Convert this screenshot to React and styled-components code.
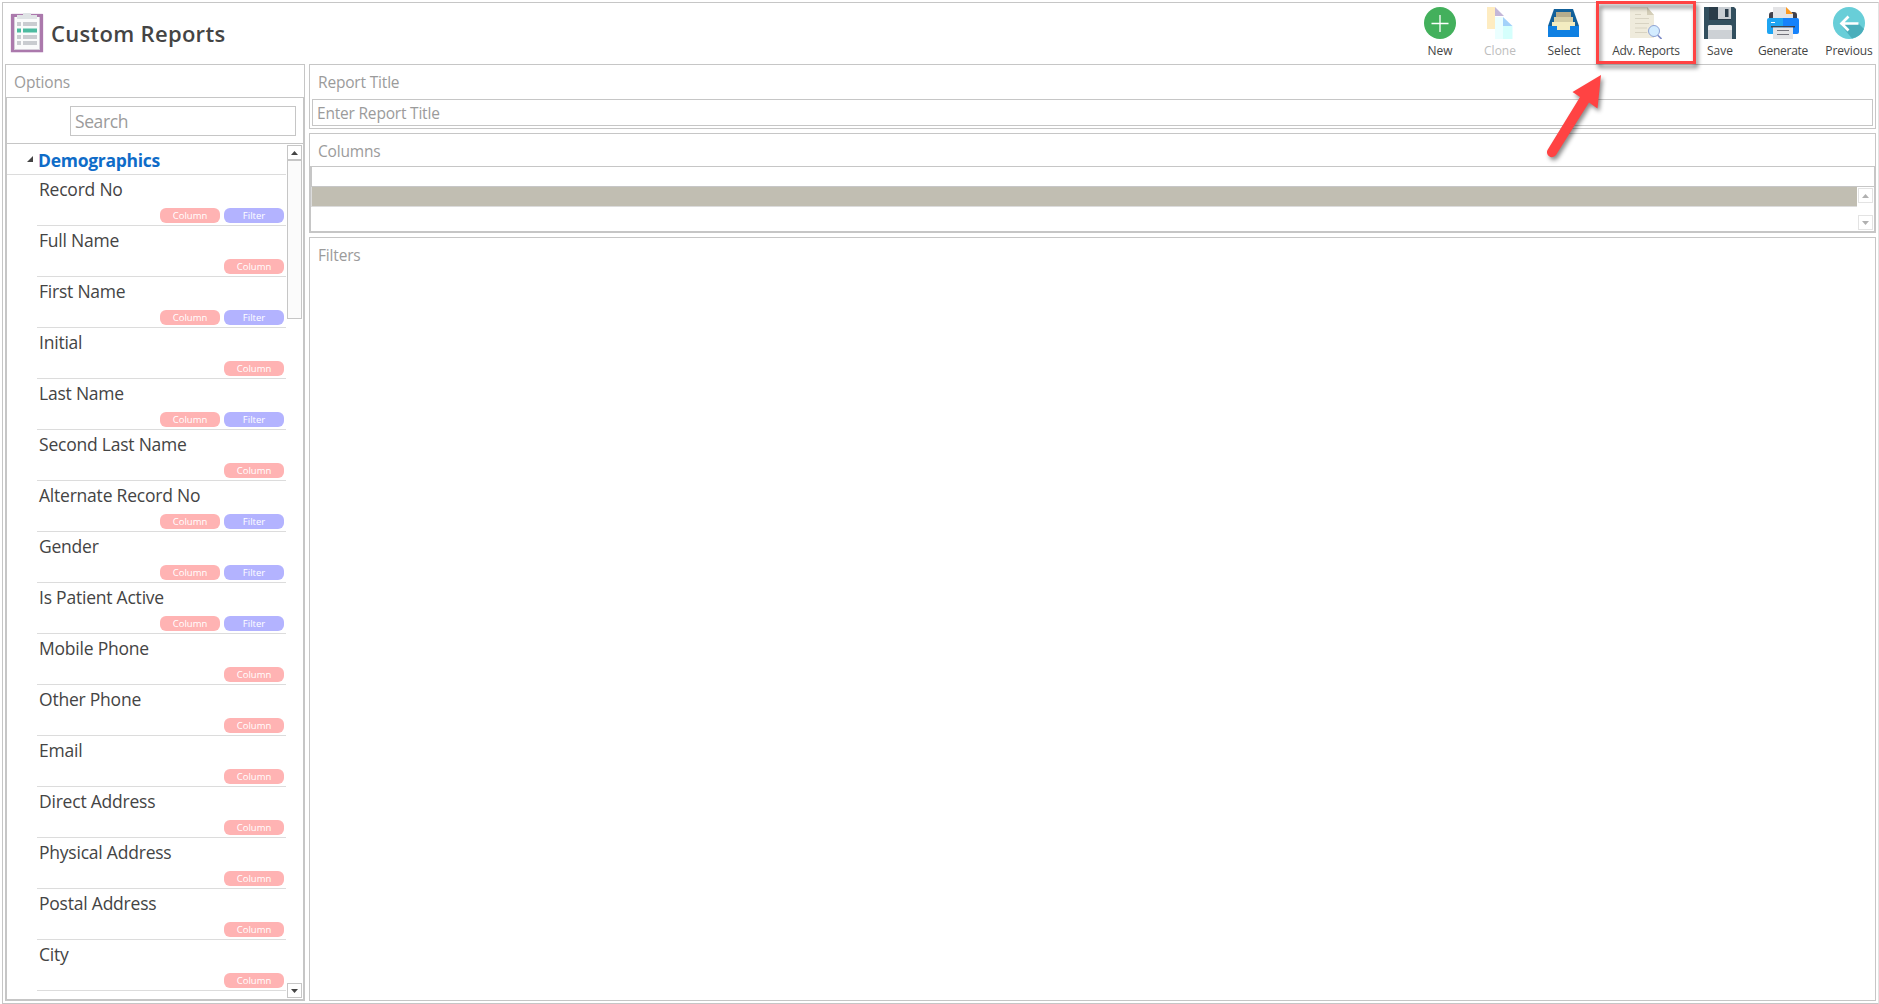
import styled, { createGlobalStyle } from "styled-components";

const GlobalStyle = createGlobalStyle`
	* {
		box-sizing: border-box;
	}
	body {
		margin: 0;
		background: #fff;
		font-family: "Open Sans", "Noto Sans", sans-serif;
		color: #444;
	}
`;

const Page = styled.div`
	position: relative;
	width: 1879px;
	height: 1004px;
	padding: 2px 0 0 2px;
	overflow: hidden;
`;

const Frame = styled.div`
	display: flex;
	flex-direction: column;
	height: 1002px;
	border: 1px solid #c6c6c6;
	border-right-color: #e3e3e3;
	padding: 0 2px 2px;
`;

const Header = styled.header`
	display: flex;
	justify-content: space-between;
	height: 61px;
	margin-right: -2px;
`;

const Brand = styled.div`
	display: flex;
	align-items: flex-start;
	padding: 10px 0 0 5px;
`;

const Title = styled.h1`
	margin: 4px 0 0 7px;
	font-size: 22px;
	line-height: 32px;
	font-weight: 600;
	letter-spacing: 0.3px;
	white-space: nowrap;
`;

const Toolbar = styled.nav`
	display: flex;
`;

const Tool = styled.div`
	display: flex;
	flex-direction: column;
	align-items: center;
	width: ${(p) => p.$width}px;
	margin-left: ${(p) => p.$gap || 0}px;
	padding-top: 4px;

	svg {
		display: block;
		opacity: ${(p) => (p.$disabled ? 0.4 : 1)};
	}
`;

const ToolLabel = styled.span`
	margin-top: 4px;
	font-size: 12px;
	line-height: 16px;
	letter-spacing: ${(p) => p.$tracking || 0}px;
	white-space: nowrap;
	color: ${(p) => (p.$disabled ? "#bdbdbd" : "#444")};
`;

const Body = styled.div`
	display: flex;
	flex: 1;
	gap: 4px;
	min-height: 0;
`;

const Panel = styled.section`
	display: flex;
	flex-direction: column;
	border: 1px solid #c6c6c6;
	height: ${(p) => p.$height || "auto"};
	flex: ${(p) => (p.$grow ? 1 : "none")};
	min-height: 0;
`;

const OptionsPanel = styled(Panel)`
	width: 300px;
`;

const PanelTitle = styled.h2`
	margin: 0;
	padding: 6px 0 0 8px;
	height: ${(p) => p.$height}px;
	font-size: 15.5px;
	line-height: 23px;
	font-weight: 400;
	letter-spacing: -0.18px;
	color: #9b9b9b;
`;

const OptionsBody = styled.div`
	display: flex;
	flex-direction: column;
	flex: 1;
	min-height: 0;
	border: 1px solid #c6c6c6;
`;

const SearchBar = styled.div`
	height: 46px;
	padding: 8px 8px 0 63px;
	border-bottom: 1px solid #c6c6c6;
`;

const SearchField = styled.div`
	width: 226px;
	height: 30px;
	padding-left: 4px;
	border: 1px solid #c6c6c6;
	font-size: 17.5px;
	line-height: 29px;
	letter-spacing: -0.4px;
	color: #9b9b9b;
`;

const ListArea = styled.div`
	display: flex;
	flex: 1;
	justify-content: space-between;
	min-height: 0;
	padding-right: 1px;
`;

const List = styled.div`
	width: 279px;
	overflow: hidden;
`;

const Group = styled.div`
	display: flex;
	align-items: center;
	height: 31px;
	padding: 2px 0 0 20px;
	border-bottom: 1px solid #dcdcdc;
	font-size: 17.5px;
	font-weight: 700;
	letter-spacing: -0.28px;
	color: #0f6cc8;

	svg {
		margin: -2px 5px 0 0;
	}
`;

const Item = styled.div`
	display: flex;
	flex-direction: column;
	justify-content: space-between;
	height: 51px;
	margin-left: 30px;
	padding: 2px;
	border-bottom: 1px solid #dcdcdc;
`;

const ItemName = styled.span`
	font-size: 17.5px;
	line-height: 24px;
	letter-spacing: -0.22px;
	white-space: nowrap;
`;

const Pills = styled.div`
	display: flex;
	justify-content: flex-end;
	gap: 4px;
`;

const Pill = styled.span`
	width: 60px;
	height: 15px;
	border-radius: 6px;
	background: ${(p) => (p.$kind === "Filter" ? "#b3b3ff" : "#ffb3b3")};
	color: #fff;
	font-size: 9.5px;
	font-weight: 500;
	line-height: 15px;
	text-align: center;
`;

const Scrollbar = styled.div`
	display: flex;
	flex-direction: column;
	width: 15px;
	margin: ${(p) => p.$margin};
`;

const ScrollButton = styled.div`
	display: flex;
	align-items: center;
	justify-content: center;
	height: 15px;
	flex: none;
	border: 1px solid ${(p) => (p.$disabled ? "#e3e3e3" : "#c6c6c6")};
	color: ${(p) => (p.$disabled ? "#b0b0b0" : "#444")};
`;

const ScrollThumb = styled.div`
	height: 159px;
	border: 1px solid #c6c6c6;
	background: #fbfbfb;
`;

const Spacer = styled.div`
	flex: 1;
`;

const Main = styled.main`
	display: flex;
	flex-direction: column;
	gap: 4px;
	flex: 1;
`;

const TitleField = styled.div`
	height: 27px;
	margin: 0 2px;
	padding-left: 4px;
	border: 1px solid #c6c6c6;
	font-size: 15.5px;
	line-height: 27px;
	letter-spacing: -0.2px;
	color: #9b9b9b;
`;

const Grid = styled.div`
	flex: 1;
	display: flex;
	flex-direction: column;
	border: 1px solid #c6c6c6;
`;

const GridHeader = styled.div`
	height: 20px;
	border-left: 1px solid #c6c6c6;
	border-bottom: 1px solid #c6c6c6;
`;

const GridBody = styled.div`
	display: flex;
	flex: 1;
`;

const SelectedRow = styled.div`
	flex: 1;
	height: 20px;
	margin-right: 1px;
	border-left: 1px solid #dcdcdc;
	border-bottom: 1px solid #dcdcdc;
	background: #c1beb2;
`;

const Highlight = styled.div`
	position: absolute;
	left: 1596px;
	top: 1px;
	width: 100px;
	height: 63px;
	border: 3px solid #ff4343;
	filter: drop-shadow(2px 4px 2px rgba(0, 0, 0, 0.5));
`;

const Pointer = styled.svg`
	position: absolute;
	left: 1536px;
	top: 64px;
	filter: drop-shadow(2px 3px 2px rgba(0, 0, 0, 0.45));
`;

const ReportIcon = () => (
	<svg width="34" height="41" viewBox="0 0 34 41">
		<rect x="0.5" y="0.5" width="33" height="39.5" rx="1.5" fill="#e8d9ea" />
		<rect x="1" y="1" width="32" height="38" fill="#ab79ac" />
		<rect x="4" y="4" width="26" height="33" fill="#d5cfd9" />
		<rect x="5" y="4" width="24" height="32" fill="#fafbfb" />
		<path d="M7 2h6V0h8v2h6v4H7z" fill="#dfe3e5" />
		<path d="M7 9h4v4H7zM13 9h14v4H13zM7 22h4v4H7zM13 22h14v4H13zM7 28h4v4H7zM13 28h14v4H13z" fill="#c9ccd0" />
		<path d="M7 15.500h4v4H7zM13 15.500h14v4H13z" fill="#4dbba0" />
	</svg>
);

const NewIcon = () => (
	<svg width="32" height="32" viewBox="0 0 32 32">
		<circle cx="16" cy="16" r="16" fill="#43b05c" />
		<path d="M16 8v17M7.500 16.500h17" stroke="#fff" strokeWidth="1.300" />
	</svg>
);

const CloneIcon = () => (
	<svg width="32" height="32" viewBox="0 0 32 32">
		<path d="M3 0h8v10v12H3z" fill="#fdd166" />
		<path d="M11 0l9 9h-9z" fill="#6b4ea0" />
		<path d="M11 10h8v9v13H11z" fill="#cfffff" />
		<path d="M19 19h9.500v13H19z" fill="#99fff8" />
		<path d="M19 10l9.500 9H19z" fill="#1c90f3" />
	</svg>
);

const SelectIcon = () => (
	<svg width="32" height="32" viewBox="0 0 32 32">
		<path d="M6 2h19l6 17v2H0v-2z" fill="#11609a" />
		<path d="M8 5h15v8H8z" fill="#b5ac8c" />
		<path d="M6 10h19v8H6z" fill="#d6cfa8" />
		<path d="M4 15h23v9H4z" fill="#f3ecc0" />
		<path d="M0 19h9v4h13v-4h9v11H0z" fill="#0f80e2" />
	</svg>
);

const AdvIcon = () => (
	<svg width="32" height="32" viewBox="0 0 32 32">
		<path d="M0 0h17l7 8v23H0z" fill="#efebdc" />
		<path d="M17 0l7 8h-7z" fill="#d4ceb8" />
		<path d="M5 7.500h6M5 11.500h14M5 16.500h14M5 21h12M5 25.500h12" stroke="#d8d3c2" />
		<path d="M27.500 28l4 4" stroke="#7e8cc8" strokeWidth="1.600" />
		<circle cx="24" cy="24" r="5.500" fill="#d3ecff" stroke="#8fa3d4" />
	</svg>
);

const SaveIcon = () => (
	<svg width="32" height="32" viewBox="0 0 32 32">
		<path d="M0 0h30l2 2v30H0z" fill="#324f5e" />
		<path d="M5 0h22v13H5z" fill="#2a3c49" />
		<path d="M14 0h13v12H14z" fill="#c9ced3" />
		<path d="M21 2h3.500v8H21z" fill="#2a3c49" />
		<path d="M4 20q0-2 2-2h20q2 0 2 2v12H4z" fill="#cdd1d5" />
		<path d="M4 20q0-2 2-2h20q2 0 2 2v3H4z" fill="#e8eaec" />
	</svg>
);

const GenerateIcon = () => (
	<svg width="32" height="32" viewBox="0 0 32 32">
		<path d="M2 11V8q0-3 3-3h22q3 0 3 3v3z" fill="#42424d" />
		<path d="M6 0h13l7 7v5H6z" fill="#e4e4e6" />
		<path d="M19 0l7 7h-7z" fill="#fe9b22" />
		<path d="M2 11h14v16H2q-2 0-2-2V13q0-2 2-2z" fill="#1fa5f2" />
		<path d="M16 11h14q2 0 2 2v12q0 2-2 2H16z" fill="#1682fb" />
		<path d="M4 15.500h4" stroke="#fff" />
		<path d="M4 19h24v1.500H4z" fill="#42424d" />
		<path d="M6 20.500h20V32H6z" fill="#e4e4e6" />
		<path d="M10 23.500h12M10 27.500h12" stroke="#74747c" />
	</svg>
);

const PreviousIcon = () => (
	<svg width="32" height="32" viewBox="0 0 32 32">
		<circle cx="16" cy="16" r="16" fill="#68ced8" />
		<path d="M25 16l6 6a16 16 0 0 1-12 9.500L8 18z" fill="#4aaebb" />
		<path d="M25.500 16.500H9M15.500 9.500l-7 7 7 7" fill="none" stroke="#fff" strokeWidth="2.700" />
	</svg>
);

const Triangle = ({ down }) => (
	<svg width="7" height="4" viewBox="0 0 7 4">
		<path d={down ? "M0 0h7L3.500 4z" : "M0 4h7L3.500 0z"} fill="currentColor" />
	</svg>
);

const tools = [
	{ label: "New", Icon: NewIcon, width: 60 },
	{ label: "Clone", Icon: CloneIcon, width: 60, disabled: true },
	{ label: "Select", Icon: SelectIcon, width: 68 },
	{ label: "Adv. Reports", Icon: AdvIcon, width: 96, tracking: -0.27 },
	{ label: "Save", Icon: SaveIcon, width: 52 },
	{ label: "Generate", Icon: GenerateIcon, width: 72, gap: 1, tracking: -0.25 },
	{ label: "Previous", Icon: PreviousIcon, width: 58, gap: 1, tracking: -0.1 },
];

const fields = [
	{ name: "Record No", filter: true },
	{ name: "Full Name" },
	{ name: "First Name", filter: true },
	{ name: "Initial" },
	{ name: "Last Name", filter: true },
	{ name: "Second Last Name" },
	{ name: "Alternate Record No", filter: true },
	{ name: "Gender", filter: true },
	{ name: "Is Patient Active", filter: true },
	{ name: "Mobile Phone" },
	{ name: "Other Phone" },
	{ name: "Email" },
	{ name: "Direct Address" },
	{ name: "Physical Address" },
	{ name: "Postal Address" },
	{ name: "City" },
];

export default function App() {
	return (
		<Page>
			<GlobalStyle />
			<Frame>
				<Header>
					<Brand>
						<ReportIcon />
						<Title>Custom Reports</Title>
					</Brand>
					<Toolbar>
						{tools.map(({ label, Icon, width, gap, disabled, tracking }) => (
							<Tool key={label} $width={width} $gap={gap} $disabled={disabled}>
								<Icon />
								<ToolLabel $disabled={disabled} $tracking={tracking}>{label}</ToolLabel>
							</Tool>
						))}
					</Toolbar>
				</Header>

				<Body>
					<OptionsPanel>
						<PanelTitle $height={32}>Options</PanelTitle>
						<OptionsBody>
							<SearchBar>
								<SearchField>Search</SearchField>
							</SearchBar>
							<ListArea>
								<List>
									<Group>
										<svg width="6" height="6" viewBox="0 0 6 6">
											<path d="M6 0v6H0z" fill="#444" />
										</svg>
										Demographics
									</Group>
									{fields.map((field) => (
										<Item key={field.name}>
											<ItemName>{field.name}</ItemName>
											<Pills>
												<Pill $kind="Column">Column</Pill>
												{field.filter && <Pill $kind="Filter">Filter</Pill>}
											</Pills>
										</Item>
									))}
								</List>
								<Scrollbar $margin="1px 0">
									<ScrollButton>
										<Triangle />
									</ScrollButton>
									<ScrollThumb />
									<Spacer />
									<ScrollButton>
										<Triangle down />
									</ScrollButton>
								</Scrollbar>
							</ListArea>
						</OptionsBody>
					</OptionsPanel>

					<Main>
						<Panel $height="65px">
							<PanelTitle $height={34}>Report Title</PanelTitle>
							<TitleField>Enter Report Title</TitleField>
						</Panel>
						<Panel $height="100px">
							<PanelTitle $height={32}>Columns</PanelTitle>
							<Grid>
								<GridHeader />
								<GridBody>
									<SelectedRow />
									<Scrollbar $margin="1px 1px 1px 0">
										<ScrollButton $disabled>
											<Triangle />
										</ScrollButton>
										<Spacer />
										<ScrollButton $disabled>
											<Triangle down />
										</ScrollButton>
									</Scrollbar>
								</GridBody>
							</Grid>
						</Panel>
						<Panel $grow>
							<PanelTitle $height={32}>Filters</PanelTitle>
						</Panel>
					</Main>
				</Body>
			</Frame>

			<Highlight />
			<Pointer width="80" height="100" viewBox="0 0 80 100">
				<path d="M65 11L36.500 28l7.500 5L11.800 85.500a4.800 4.800 0 0 0 8.200 5.500L53 38.500l8.500 6z" fill="#ff4343" />
			</Pointer>
		</Page>
	);
}
